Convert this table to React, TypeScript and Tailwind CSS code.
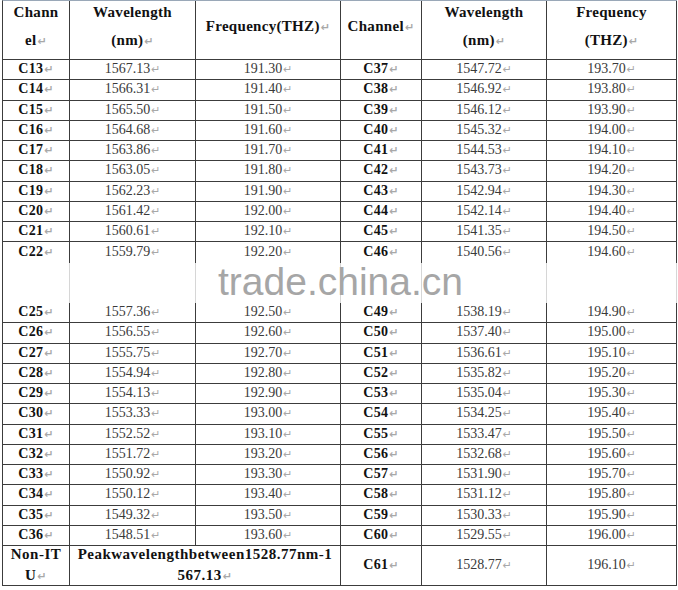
const left: [string, string, string][] = [
  ["C13", "1567.13", "191.30"],
  ["C14", "1566.31", "191.40"],
  ["C15", "1565.50", "191.50"],
  ["C16", "1564.68", "191.60"],
  ["C17", "1563.86", "191.70"],
  ["C18", "1563.05", "191.80"],
  ["C19", "1562.23", "191.90"],
  ["C20", "1561.42", "192.00"],
  ["C21", "1560.61", "192.10"],
  ["C22", "1559.79", "192.20"],
  ["", "", ""],
  ["", "", ""],
  ["C25", "1557.36", "192.50"],
  ["C26", "1556.55", "192.60"],
  ["C27", "1555.75", "192.70"],
  ["C28", "1554.94", "192.80"],
  ["C29", "1554.13", "192.90"],
  ["C30", "1553.33", "193.00"],
  ["C31", "1552.52", "193.10"],
  ["C32", "1551.72", "193.20"],
  ["C33", "1550.92", "193.30"],
  ["C34", "1550.12", "193.40"],
  ["C35", "1549.32", "193.50"],
  ["C36", "1548.51", "193.60"],
];

const right: [string, string, string][] = [
  ["C37", "1547.72", "193.70"],
  ["C38", "1546.92", "193.80"],
  ["C39", "1546.12", "193.90"],
  ["C40", "1545.32", "194.00"],
  ["C41", "1544.53", "194.10"],
  ["C42", "1543.73", "194.20"],
  ["C43", "1542.94", "194.30"],
  ["C44", "1542.14", "194.40"],
  ["C45", "1541.35", "194.50"],
  ["C46", "1540.56", "194.60"],
  ["", "", ""],
  ["", "", ""],
  ["C49", "1538.19", "194.90"],
  ["C50", "1537.40", "195.00"],
  ["C51", "1536.61", "195.10"],
  ["C52", "1535.82", "195.20"],
  ["C53", "1535.04", "195.30"],
  ["C54", "1534.25", "195.40"],
  ["C55", "1533.47", "195.50"],
  ["C56", "1532.68", "195.60"],
  ["C57", "1531.90", "195.70"],
  ["C58", "1531.12", "195.80"],
  ["C59", "1530.33", "195.90"],
  ["C60", "1529.55", "196.00"],
];

// paragraph mark left behind by the word processor
function Mark() {
  return <span className="ml-[1px] text-[11px] text-[#a8a8a8] font-['DejaVu_Sans',sans-serif]">↵</span>;
}

const cols = "grid grid-cols-[67px_126px_145px_81px_125px_130px]";

function Cell({ text, bold, band, noBottom }: { text: string; bold?: boolean; band?: boolean; noBottom?: boolean }) {
  return (
    <div
      className={
        "flex items-center justify-center overflow-hidden border-r " +
        (band ? "border-r-[#d6d6d6] " : "border-r-[#3c3c3c] ") +
        (noBottom ? "" : "border-b border-b-[#3c3c3c] ") +
        (bold ? "font-bold text-[#111] tracking-[0.3px]" : "text-[#3a3a3a]")
      }
    >
      {text && (
        <span className="leading-[18px]">
          {text}
          <Mark />
        </span>
      )}
    </div>
  );
}

function Head({ lines }: { lines: string[] }) {
  return (
    <div className="flex flex-col items-center justify-center overflow-hidden border-r border-b border-[#3c3c3c]">
      <div className="-mt-[6px] flex flex-col items-center">
        {lines.map((t, i) => (
          <span key={i}>
            {t}
            {i === lines.length - 1 && <Mark />}
          </span>
        ))}
      </div>
    </div>
  );
}

export default function App() {
  return (
    <div className="relative w-[678px] h-[590px] bg-white font-['Liberation_Serif',serif]">
      <div className="ml-[2px] w-[675px] border-l border-t border-l-[#3c3c3c] border-t-[#9aa8b8]">
        {/* header */}
        <div className={cols + " grid-rows-[59px] h-[59px] text-[15px] font-bold text-[#111] tracking-[0.3px] leading-[28px]"}>
          <Head lines={["Chann", "el"]} />
          <Head lines={["Wavelength", "(nm)"]} />
          <Head lines={["Frequency(THZ)"]} />
          <Head lines={["Channel"]} />
          <Head lines={["Wavelength", "(nm)"]} />
          <Head lines={["Frequency", "(THZ)"]} />
        </div>

        {/* data rows */}
        {left.map((l, i) => {
          const r = right[i];
          const band = i === 10 || i === 11;
          const noBottom = i >= 9 && i <= 11;
          return (
            <div key={i} className={cols + " grid-rows-[20.25px] h-[20.25px] text-[14px]"}>
              <Cell text={l[0]} bold band={band} noBottom={noBottom} />
              <Cell text={l[1]} band={band} noBottom={noBottom} />
              <Cell text={l[2]} band={band} noBottom={noBottom} />
              <Cell text={r[0]} bold band={band} noBottom={noBottom} />
              <Cell text={r[1]} band={band} noBottom={noBottom} />
              <Cell text={r[2]} band={band} noBottom={noBottom} />
            </div>
          );
        })}

        {/* last row */}
        <div className="grid grid-cols-[67px_271px_81px_125px_130px] grid-rows-[40px] h-[40px] text-[14px]">
          <div className="flex flex-col items-center justify-center border-r border-b border-[#3c3c3c] font-bold text-[15px] text-[#111] tracking-[0.5px] leading-[21px]">
            <span>Non-IT</span>
            <span>
              U<Mark />
            </span>
          </div>
          <div className="flex flex-col items-center justify-center border-r border-b border-[#3c3c3c] font-bold text-[15px] text-[#111] tracking-[0.5px] leading-[21px]">
            <span>Peakwavelengthbetween1528.77nm-1</span>
            <span>
              567.13<Mark />
            </span>
          </div>
          <Cell text="C61" bold />
          <Cell text="1528.77" />
          <Cell text="196.10" />
        </div>
      </div>

      {/* watermark over the middle band */}
      <div className="absolute left-[218px] top-[262px] text-[39px] leading-[39px] text-[#a6a6a6] font-['Liberation_Sans',Arial,sans-serif] pointer-events-none">
        trade.china.cn
      </div>
    </div>
  );
}
